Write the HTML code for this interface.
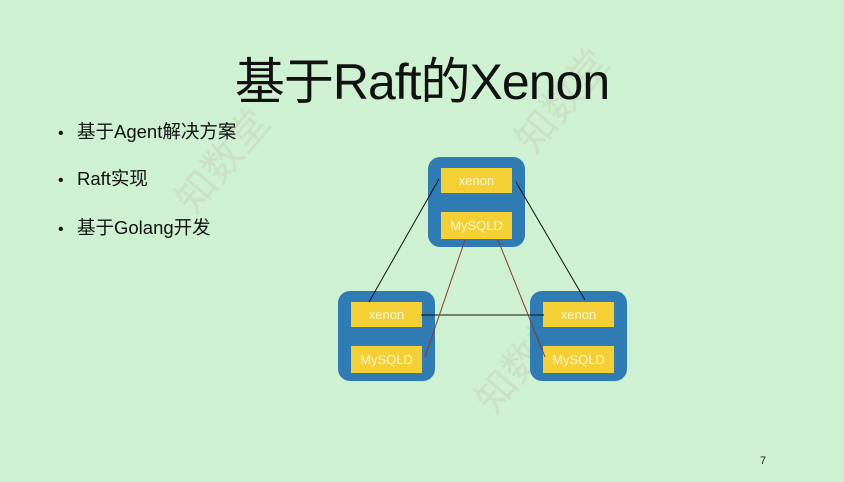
<!DOCTYPE html>
<html><head><meta charset="utf-8"><style>
body{margin:0;width:844px;height:482px;background:#cdf1d1;position:relative;overflow:hidden;font-family:"Liberation Sans","Noto Sans CJK SC",sans-serif;}
.t{position:absolute;left:0;width:844px;top:42px;text-align:center;font-size:50px;color:#111;letter-spacing:-1px;}
.b{position:absolute;left:58px;font-size:18.5px;color:#111;}
.b span{display:inline-block;width:19px;font-size:16px;}
.wm{position:absolute;color:rgba(190,170,150,0.22);font-size:40px;transform:rotate(-50deg);}
.box{position:absolute;width:97px;height:90px;background:#2f7bb4;border-radius:12px;}
.y{position:absolute;left:13px;width:71px;background:#f4d035;color:#fff7d8;text-align:center;font-size:13px;}
</style></head><body>
<div class="wm" style="left:160px;top:130px">知数堂</div>
<div class="wm" style="left:500px;top:70px">知数堂</div>
<div class="wm" style="left:460px;top:330px">知数堂</div>
<div class="t">基于Raft的Xenon</div>
<div class="b" style="top:118px"><span>•</span>基于Agent解决方案</div>
<div class="b" style="top:165px"><span>•</span>Raft实现</div>
<div class="b" style="top:214px"><span>•</span>基于Golang开发</div>
<div class="box" style="left:428px;top:157px"><div class="y" style="top:11px;height:25px;line-height:25px">xenon</div><div class="y" style="top:55px;height:27px;line-height:27px">MySQLD</div></div>
<div class="box" style="left:338px;top:291px"><div class="y" style="top:11px;height:25px;line-height:25px">xenon</div><div class="y" style="top:55px;height:27px;line-height:27px">MySQLD</div></div>
<div class="box" style="left:530px;top:291px"><div class="y" style="top:11px;height:25px;line-height:25px">xenon</div><div class="y" style="top:55px;height:27px;line-height:27px">MySQLD</div></div>
<svg style="position:absolute;left:0;top:0" width="844" height="482">
<g stroke="#111" stroke-width="1">
<line x1="439" y1="179" x2="369" y2="302"/>
<line x1="516" y1="182" x2="585" y2="300"/>
<line x1="421" y1="315" x2="544" y2="315"/>
</g>
<g stroke="#8a3a2a" stroke-width="1">
<line x1="465" y1="240" x2="425" y2="357"/>
<line x1="498" y1="240" x2="545" y2="357"/>
</g>
</svg>
<div style="position:absolute;left:760px;top:455px;font-size:11px;color:#222">7</div>
</body></html>
